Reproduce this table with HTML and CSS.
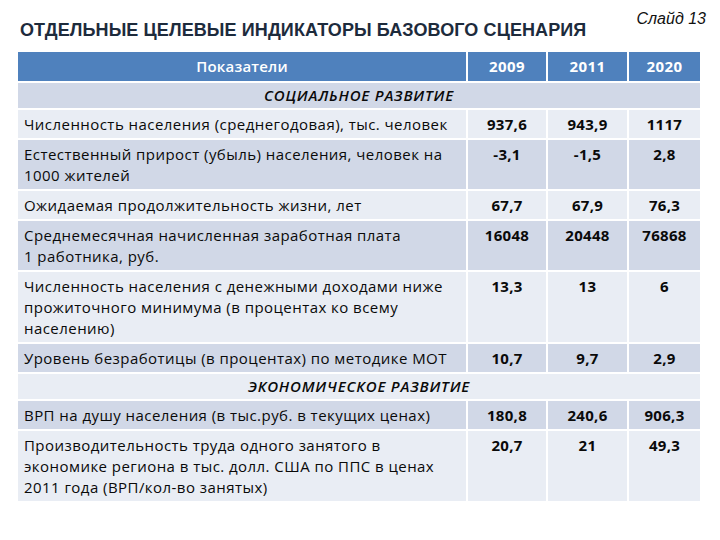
FILE: index.html
```html
<!DOCTYPE html>
<html lang="ru">
<head>
<meta charset="utf-8">
<title>Слайд 13</title>
<link rel="stylesheet" href="styles.css">
</head>
<body>
<div class="slide">
  <div class="top">
    <h1 class="title">ОТДЕЛЬНЫЕ ЦЕЛЕВЫЕ ИНДИКАТОРЫ БАЗОВОГО СЦЕНАРИЯ</h1>
    <div class="label">Слайд 13</div>
  </div>
  <table class="grid">
    <colgroup>
      <col class="c-name"><col class="c-y1"><col class="c-y2"><col class="c-y3">
    </colgroup>
    <thead>
      <tr class="head">
        <th>Показатели</th><th>2009</th><th>2011</th><th>2020</th>
      </tr>
    </thead>
    <tbody>
      <tr class="section dark"><td colspan="4">СОЦИАЛЬНОЕ РАЗВИТИЕ</td></tr>
      <tr class="light"><td>Численность населения (среднегодовая), тыс. человек</td><td>937,6</td><td>943,9</td><td>1117</td></tr>
      <tr class="dark"><td>Естественный прирост (убыль) населения, человек на<br>1000 жителей</td><td>-3,1</td><td>-1,5</td><td>2,8</td></tr>
      <tr class="light"><td>Ожидаемая продолжительность жизни, лет</td><td>67,7</td><td>67,9</td><td>76,3</td></tr>
      <tr class="dark"><td>Среднемесячная начисленная заработная плата<br>1 работника, руб.</td><td>16048</td><td>20448</td><td>76868</td></tr>
      <tr class="light"><td>Численность населения с денежными доходами ниже<br>прожиточного минимума (в процентах ко всему<br>населению)</td><td>13,3</td><td>13</td><td>6</td></tr>
      <tr class="dark"><td>Уровень безработицы (в процентах) по методике МОТ</td><td>10,7</td><td>9,7</td><td>2,9</td></tr>
      <tr class="section light"><td colspan="4">ЭКОНОМИЧЕСКОЕ РАЗВИТИЕ</td></tr>
      <tr class="dark"><td>ВРП на душу населения (в тыс.руб. в текущих ценах)</td><td>180,8</td><td>240,6</td><td>906,3</td></tr>
      <tr class="light"><td>Производительность труда одного занятого в<br>экономике региона в тыс. долл. США по ППС в ценах<br>2011 года (ВРП/кол-во занятых)</td><td>20,7</td><td>21</td><td>49,3</td></tr>
    </tbody>
  </table>
</div>
</body>
</html>
```
FILE: styles.css
```css
html, body {
  margin: 0;
  padding: 0;
  background: #ffffff;
}
.slide {
  width: 720px;
  height: 540px;
  padding: 0 0 0 16px;
  box-sizing: border-box;
}
.top {
  display: flex;
  justify-content: space-between;
  align-items: flex-start;
  height: 50px;
}
.title {
  margin: 20px 0 0 4px;
  font-family: "Liberation Sans", Arial, sans-serif;
  font-weight: bold;
  font-size: 18px;
  line-height: 21px;
  color: #1d2b3c;
  letter-spacing: 0.1px;
}
.label {
  margin: 10px 14px 0 0;
  font-family: "Liberation Sans", Arial, sans-serif;
  font-style: italic;
  font-size: 16px;
  line-height: 18px;
  color: #111;
}
.grid {
  border-collapse: collapse;
  table-layout: fixed;
  width: 684px;
  font-family: "Open Sans", "DejaVu Sans", sans-serif;
  font-size: 15px;
  letter-spacing: 0.45px;
  color: #0a0a0a;
}
.c-name { width: 450px; }
.c-y1 { width: 80px; }
.c-y2 { width: 81px; }
.c-y3 { width: 73px; }
.grid th, .grid td {
  border: 2px solid #ffffff;
  vertical-align: top;
  line-height: 21px;
  padding: 4px 2px 3px;
  text-align: center;
  white-space: nowrap;
}
.grid td:first-child {
  text-align: left;
  padding-left: 6px;
}
.grid td + td {
  font-weight: bold;
  letter-spacing: 0.3px;
}
.head th {
  background: #4f81bd;
  color: #ffffff;
  font-weight: bold;
  padding: 4px 2px 3px;
  height: 22px;
}
.head th:first-child { font-weight: 600; letter-spacing: 0.2px; }
.dark td { background: #d1d8e7; }
.light td { background: #e9edf4; }
.section td,
.grid .section td:first-child {
  text-align: center;
  font-style: italic;
  font-weight: 600;
  letter-spacing: 0.8px;
  padding: 2px 4px 2px;
}
```
